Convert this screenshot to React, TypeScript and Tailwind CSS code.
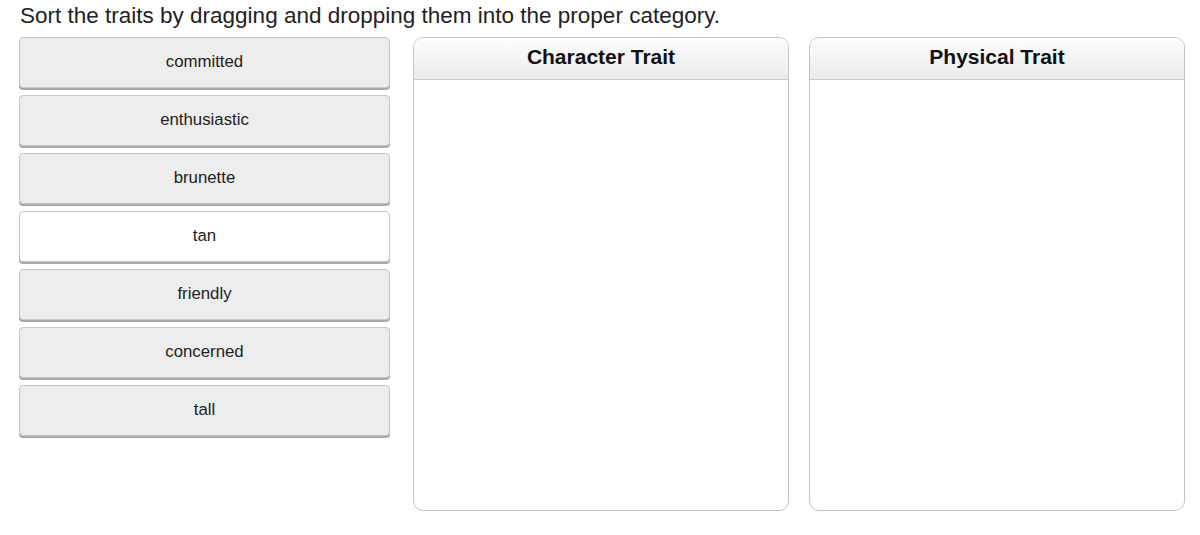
import React from 'react';

const TRAITS = [
  { label: 'committed', active: false },
  { label: 'enthusiastic', active: false },
  { label: 'brunette', active: false },
  { label: 'tan', active: true },
  { label: 'friendly', active: false },
  { label: 'concerned', active: false },
  { label: 'tall', active: false },
];

const CATEGORIES = ['Character Trait', 'Physical Trait'];

export default function App() {
  return (
    <div className="w-[1200px] h-[535px] bg-white text-[#1a1a1a] font-['Liberation_Sans',Arial,sans-serif] overflow-hidden">
      <h1 className="pl-[20px] pt-[1px] text-[22.5px] leading-[29px] text-[#222]">
        Sort the traits by dragging and dropping them into the proper category.
      </h1>

      <div className="flex pl-[19px] pt-[7px]">
        {/* draggable items */}
        <div className="flex flex-col gap-[7px] w-[371px]">
          {TRAITS.map((t) => (
            <div
              key={t.label}
              className={`h-[51px] flex items-center justify-center rounded-[4px] border border-[#c6c6c6] shadow-[0_2px_0_#a9a9a9] text-[16.8px] text-[#222] pb-[2px] ${
                t.active ? 'bg-white' : 'bg-[#ededed]'
              }`}
            >
              {t.label}
            </div>
          ))}
        </div>

        {/* drop zones */}
        <div className="flex ml-[23px] gap-[20px]">
          {CATEGORIES.map((c) => (
            <div
              key={c}
              className="w-[376px] h-[474px] rounded-[10px] border border-[#c4c4c4] bg-white overflow-hidden flex flex-col"
            >
              <div className="h-[42px] flex items-center justify-center border-b border-[#c8c8c8] bg-gradient-to-b from-[#fdfdfd] to-[#ebebeb] text-[21px] font-bold text-[#111] pb-[3px]">
                {c}
              </div>
              <div className="flex-1" />
            </div>
          ))}
        </div>
      </div>
    </div>
  );
}
